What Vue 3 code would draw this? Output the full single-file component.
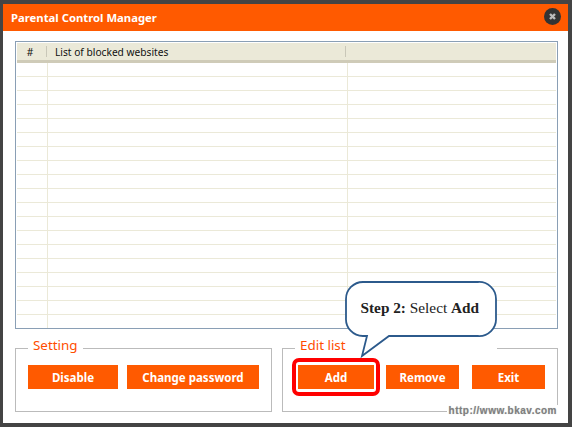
<script setup>
const rows = Array.from({ length: 19 })
</script>

<template>
  <div class="window">
    <header class="titlebar">
      <span class="title">Parental Control Manager</span>
      <span class="close">
        <svg width="17" height="17" viewBox="0 0 17 17"><circle cx="8.500" cy="8.500" r="8.500" fill="#333"/><path d="M6 6l5 5M11 6l-5 5" stroke="#bbb" stroke-width="2.400"/></svg>
      </span>
    </header>
    <div class="body">
      <div class="table">
        <div class="thead">
          <div class="th num">#</div>
          <div class="th name">List of blocked websites</div>
          <div class="th rest"></div>
        </div>
        <div class="tbody">
          <div v-for="(r, i) in rows" :key="i" class="row">
            <div class="c1"></div><div class="c2"></div><div class="c3"></div>
          </div>
        </div>
      </div>
      <div class="groups">
        <fieldset class="group g1">
          <legend>Setting</legend>
          <div class="btns">
            <button class="b-disable">Disable</button>
            <button class="b-pass">Change password</button>
          </div>
        </fieldset>
        <fieldset class="group g2">
          <legend class="legend-wide">Edit list</legend>
          <div class="btns b2">
            <span class="ring"><button class="b-add">Add</button></span>
            <button class="b-rem">Remove</button>
            <button class="b-exit">Exit</button>
          </div>
          <div class="callout">
            <svg class="bubble" width="154" height="78" viewBox="0 0 154 78">
              <path d="M18 1H133A17 17 0 0 1 151 18V37A17 17 0 0 1 133 55H44L17 75L22 55H18A17 17 0 0 1 1 37V18A17 17 0 0 1 18 1Z" fill="#fff" stroke="#2c5a8c" stroke-width="1.800"/>
            </svg>
            <span class="bubble-text"><b>Step 2:</b> Select <b>Add</b></span>
          </div>
          <span class="wm">http://www.bkav.com</span>
        </fieldset>
      </div>
    </div>
  </div>
</template>

<style>
html, body { margin: 0; background: #fff; }
</style>

<style scoped>
.window {
  width: 572px; height: 427px; box-sizing: border-box;
  border: solid #444; border-width: 4px 4px 4px 3px;
  background: #fff; display: flex; flex-direction: column;
  font-family: "Noto Sans", sans-serif;
}
.titlebar {
  height: 27px; background: #ff5a00; flex: none; display: flex; align-items: center;
  justify-content: space-between; padding: 0 7px 0 8px;
}
.title { color: #fff; font: bold 11.300px "Noto Sans", sans-serif; }
.close { display: flex; width: 17px; height: 17px; margin-top: -2px; }
.body { flex: 1; padding: 10px 10px 0 12px; display: flex; flex-direction: column; }
.table {
  height: 288px; box-sizing: border-box; border: 1px solid #8a9fb5; padding: 1px 1px 0; overflow: hidden; flex: none;
}
.thead { display: flex; height: 17px; background: #ebe9d8; border-bottom: 3px solid #cfcbb8; }
.th { font: 10.200px "Noto Sans", sans-serif; color: #111; display: flex; align-items: center; box-sizing: border-box; }
.num { width: 30px; justify-content: center; padding-right: 3px; border-right: 1px solid #c9c7b8; margin: 3px 0; }
.name { width: 299px; padding-left: 8px; border-right: 1px solid #c9c7b8; margin: 3px 0; }
.rest { flex: 1; }
.row { display: flex; height: 14px; box-sizing: border-box; border-bottom: 1px solid #ebe9d8; }
.c1 { width: 30px; border-right: 1px solid #ebe9d8; }
.c2 { width: 299px; border-right: 1px solid #ebe9d8; }
.c3 { flex: 1; }
.groups { display: flex; gap: 10px; margin-top: 9px; }
.group {
  margin: 0; padding: 0; box-sizing: border-box; height: 74px; border: 1px solid #bbb; position: relative; min-width: 0;
}
.g1 { width: 257px; }
.g2 { width: 276px; }
legend { margin-left: 12px; padding: 0 5px 6px; font: 13.400px "Noto Sans", sans-serif; color: #ff4d00; line-height: 14px; }
.legend-wide { padding-right: 151px; }
.btns { display: flex; padding: 7px 0 0 12px; gap: 9px; }
.b2 { padding-left: 15px; gap: 12px; }
button {
  border: 0; padding: 0; background: #ff5a00; color: #fff; height: 24px;
  font: bold 11.500px "Noto Sans", sans-serif;
}
.b-disable { width: 90px; }
.b-pass { width: 132px; }
.b-add { width: 76px; height: 24px; display: block; }
.b-rem { width: 73px; }
.b-exit { width: 73px; margin-left: 1px; }
.ring { border: 4px solid #f00; border-radius: 7px; padding: 3px 2px; margin: -7px -6px 0 -6px; height: fit-content; background: #fff; }
.callout { position: absolute; left: 62px; top: -77px; width: 154px; height: 78px; }
.bubble { display: block; }
.bubble-text { position: absolute; left: 15.500px; top: 18px; font: 15.300px "Liberation Serif", serif; color: #222; white-space: nowrap; }
.wm { position: absolute; right: -2px; bottom: -6px; background: #fff; padding: 0 2px; font: bold 10px "Liberation Sans", sans-serif; color: #808080; letter-spacing: 0.500px; line-height: 12px; text-shadow: 0 0 1px #bbb; }
</style>
